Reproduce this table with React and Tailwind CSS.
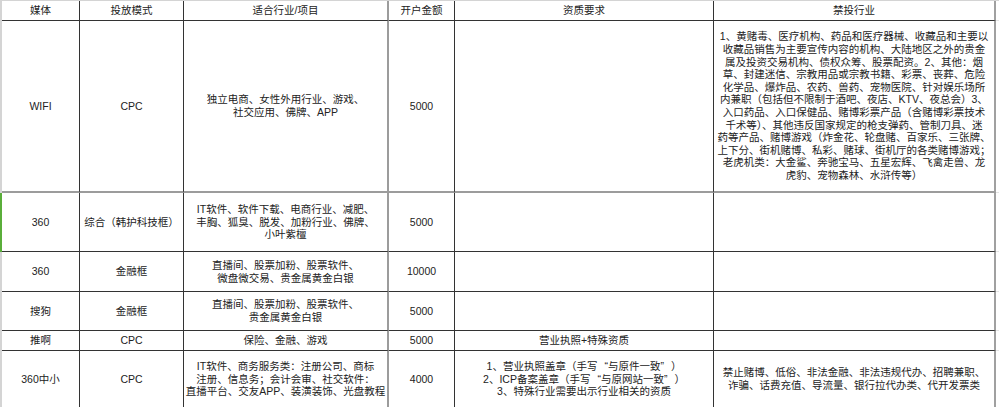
const COLS = [
  "w-[78px] border-r border-r-[#333]",
  "w-[104px] border-r border-r-[#333]",
  "w-[205px] border-r-2 border-r-[#9c9c9c]",
  "w-[66px] border-r border-r-[#333]",
  "w-[259px] border-r border-r-[#333]",
  "w-[282px] border-r-2 border-r-[#a0a0a0]",
];

const banned = [
  "1、黄赌毒、医疗机构、药品和医疗器械、收藏品和主要以",
  "收藏品销售为主要宣传内容的机构、大陆地区之外的贵金",
  "属及投资交易机构、债权众筹、股票配资。2、其他：烟",
  "草、封建迷信、宗教用品或宗教书籍、彩票、丧葬、危险",
  "化学品、爆炸品、农药、兽药、宠物医院、针对娱乐场所",
  "内兼职（包括但不限制于酒吧、夜店、KTV、夜总会）3、",
  "入口药品、入口保健品、赌博彩票产品（含赌博彩票技术",
  "千术等）、其他违反国家规定的枪支弹药、管制刀具、迷",
  "药等产品、赌博游戏（炸金花、轮盘赌、百家乐、三张牌、",
  "上下分、街机赌博、私彩、赌球、街机厅的各类赌博游戏；",
  "老虎机类：大金鲨、奔驰宝马、五星宏辉、飞禽走兽、龙",
  "虎豹、宠物森林、水浒传等）",
];

const rows = [
  {
    h: "h-[20px]",
    bottom: "border-b border-b-[#333]",
    cells: [["媒体"], ["投放模式"], ["适合行业/项目"], ["开户金额"], ["资质要求"], ["禁投行业"]],
  },
  {
    h: "h-[172px]",
    bottom: "border-b-2 border-b-[#9c9c9c]",
    cells: [
      ["WIFI"],
      ["CPC"],
      ["独立电商、女性外用行业、游戏、", "社交应用、佛牌、APP"],
      ["5000"],
      [],
      banned,
    ],
  },
  {
    h: "h-[59px]",
    bottom: "border-b border-b-[#333]",
    selected: true,
    cells: [
      ["360"],
      ["综合（韩护科技框）"],
      ["IT软件、软件下载、电商行业、减肥、", "丰胸、狐臭、脱发、加粉行业、佛牌、", "小叶紫檀"],
      ["5000"],
      [],
      [],
    ],
  },
  {
    h: "h-[40px]",
    bottom: "border-b border-b-[#333]",
    cells: [
      ["360"],
      ["金融框"],
      ["直播间、股票加粉、股票软件、", "微盘微交易、贵金属黄金白银"],
      ["10000"],
      [],
      [],
    ],
  },
  {
    h: "h-[39px]",
    bottom: "border-b border-b-[#333]",
    cells: [
      ["搜狗"],
      ["金融框"],
      ["直播间、股票加粉、股票软件、", "贵金属黄金白银"],
      ["5000"],
      [],
      [],
    ],
  },
  {
    h: "h-[20px]",
    bottom: "border-b border-b-[#333]",
    cells: [["推啊"], ["CPC"], ["保险、金融、游戏"], ["5000"], ["营业执照+特殊资质"], []],
  },
  {
    h: "h-[56px]",
    bottom: "",
    cells: [
      ["360中小"],
      ["CPC"],
      ["IT软件、商务服务类：注册公司、商标", "注册、信息务；会计会审、社交软件：", "直播平台、交友APP、装潢装饰、光盘教程"],
      ["4000"],
      ["1、营业执照盖章（手写“与原件一致”）", "2、ICP备案盖章（手写“与原网站一致”）", "3、特殊行业需要出示行业相关的资质"],
      ["禁止赌博、低俗、非法金融、非法违规代办、招聘兼职、", "诈骗、话费充值、导流量、银行拉代办类、代开发票类"],
    ],
  },
];

// full-width curly quotes, as the spreadsheet draws them
function Line({ text }) {
  const parts = text.split(/([“”])/);
  return parts.map((p, k) => {
    if (p === "“")
      return (
        <span key={k} className="inline-block w-[10.5px] text-right">
          {p}
        </span>
      );
    if (p === "”")
      return (
        <span key={k} className="inline-block w-[10.5px] text-left">
          {p}
        </span>
      );
    return p;
  });
}

function Row({ row }) {
  return (
    <div
      className={`flex ${row.h} border-l-2 ${row.selected ? "border-l-[#5aae3a]" : "border-l-[#d4d4d4]"}`}
    >
      {row.cells.map((lines, i) => (
        <div
          key={i}
          className={`${COLS[i]} ${row.bottom} ${
            i === 5 && row.selected ? "border-r-[#5aae3a]" : ""
          } flex flex-col items-center justify-center shrink-0 overflow-hidden`}
        >
          {lines.map((t, j) => (
            <div key={j} className={`whitespace-nowrap ${i === 5 ? "leading-[12.6px]" : "leading-[12.8px]"}`}>
              <Line text={t} />
            </div>
          ))}
        </div>
      ))}
      <div className={`flex-1 ${row.bottom ? "border-b border-b-[#e4e4e4]" : ""}`} />
    </div>
  );
}

export default function App() {
  return (
    <div className="w-[999px] h-[407px] overflow-hidden bg-white text-[#222] text-[10.5px] font-['Liberation_Sans','Noto_Sans_CJK_SC',sans-serif]">
      <div className="border-t border-t-[#d4d4d4]">
        {rows.map((r, i) => (
          <Row key={i} row={r} />
        ))}
      </div>
    </div>
  );
}
